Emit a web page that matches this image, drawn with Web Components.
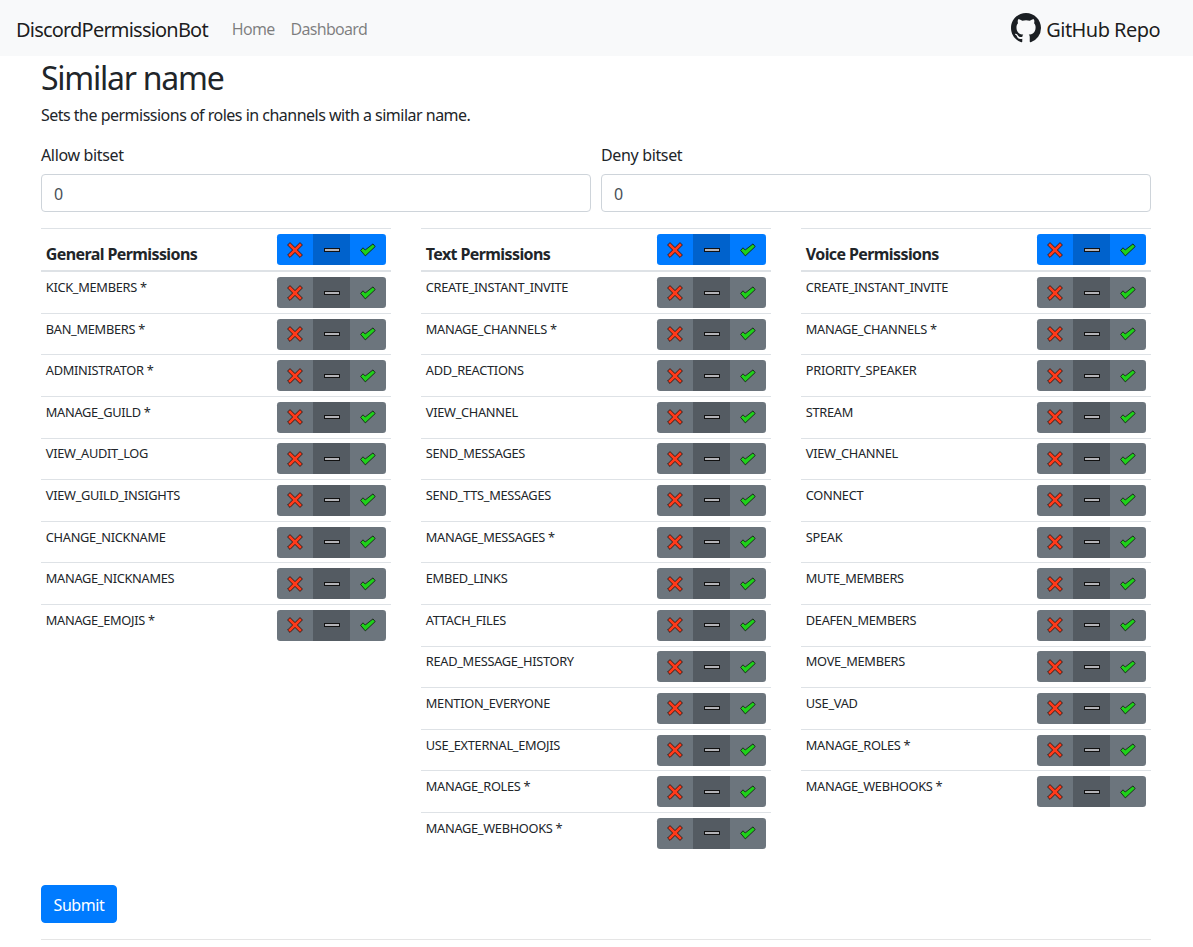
<!DOCTYPE html>
<html lang="en">
<head>
<meta charset="utf-8">
<title>Similar name</title>
<style>
  html, body { margin: 0; padding: 0; }
  body {
    font-family: "Noto Sans", "Open Sans", sans-serif;
    font-size: 16px;
    line-height: 1.5;
    color: #212529;
    background: #fff;
  }
</style>
</head>
<body>
<app-navbar></app-navbar>
<similar-name-page></similar-name-page>

<script>
const GENERAL = ["KICK_MEMBERS *", "BAN_MEMBERS *", "ADMINISTRATOR *", "MANAGE_GUILD *", "VIEW_AUDIT_LOG", "VIEW_GUILD_INSIGHTS", "CHANGE_NICKNAME", "MANAGE_NICKNAMES", "MANAGE_EMOJIS *"];
const TEXT = ["CREATE_INSTANT_INVITE", "MANAGE_CHANNELS *", "ADD_REACTIONS", "VIEW_CHANNEL", "SEND_MESSAGES", "SEND_TTS_MESSAGES", "MANAGE_MESSAGES *", "EMBED_LINKS", "ATTACH_FILES", "READ_MESSAGE_HISTORY", "MENTION_EVERYONE", "USE_EXTERNAL_EMOJIS", "MANAGE_ROLES *", "MANAGE_WEBHOOKS *"];
const VOICE = ["CREATE_INSTANT_INVITE", "MANAGE_CHANNELS *", "PRIORITY_SPEAKER", "STREAM", "VIEW_CHANNEL", "CONNECT", "SPEAK", "MUTE_MEMBERS", "DEAFEN_MEMBERS", "MOVE_MEMBERS", "USE_VAD", "MANAGE_ROLES *", "MANAGE_WEBHOOKS *"];

const templateNavbar = document.createElement("template");
templateNavbar.innerHTML = `
  <style>
    :host { display: flex; align-items: center; height: 56px; padding: 0 16px; background: #f8f9fa; box-sizing: border-box; }
    a { text-decoration: none; }
    .brand { font-size: 20px; color: rgba(0,0,0,.9); margin-right: 16px; letter-spacing: -0.8px; padding-top: 3px; }
    .link { color: rgba(0,0,0,.5); padding: 2px 8px 0; letter-spacing: -0.7px; }
    .repo { margin-left: auto; margin-right: 17px; display: flex; align-items: center; gap: 5px; font-size: 20px; color: rgba(0,0,0,.9); letter-spacing: -0.55px; }
    .repo span { padding-top: 3px; }
    svg { width: 30px; height: 30px; fill: #1b1f23; display: block; }
  </style>
  <a class="brand" href="#">DiscordPermissionBot</a>
  <a class="link" href="#">Home</a>
  <a class="link" href="#">Dashboard</a>
  <a class="repo" href="#">
    <svg viewBox="0 0 16 16"><path d="M8 0C3.58 0 0 3.58 0 8c0 3.54 2.29 6.53 5.47 7.59.4.07.55-.17.55-.38 0-.19-.01-.82-.01-1.49-2.01.37-2.53-.49-2.69-.94-.09-.23-.48-.94-.82-1.13-.28-.15-.68-.52-.01-.53.63-.01 1.08.58 1.23.82.72 1.21 1.87.87 2.33.66.07-.52.28-.87.51-1.07-1.78-.2-3.64-.89-3.64-3.95 0-.87.31-1.59.82-2.15-.08-.2-.36-1.02.08-2.12 0 0 .67-.21 2.2.82.64-.18 1.32-.27 2-.27.68 0 1.36.09 2 .27 1.53-1.04 2.2-.82 2.2-.82.44 1.1.16 1.92.08 2.12.51.56.82 1.27.82 2.15 0 3.07-1.87 3.75-3.65 3.95.29.25.54.73.54 1.48 0 1.07-.01 1.93-.01 2.2 0 .21.15.46.55.38A8.013 8.013 0 0016 8c0-4.42-3.58-8-8-8z"/></svg>
    <span>GitHub Repo</span>
  </a>
`;
class AppNavbar extends HTMLElement {
  constructor() {
    super();
    this.attachShadow({ mode: "open" }).appendChild(templateNavbar.content.cloneNode(true));
  }
}
customElements.define("app-navbar", AppNavbar);

const templateField = document.createElement("template");
templateField.innerHTML = `
  <style>
    :host { display: block; margin-bottom: 16px; }
    label { display: block; padding-top: 1px; margin-bottom: 7px; letter-spacing: -0.35px; }
    input {
      display: block; width: 100%; height: 38px; box-sizing: border-box;
      padding: 7px 12px 5px; font: inherit; color: #495057; background: #fff;
      border: 1px solid #ced4da; border-radius: 4px; outline: none;
    }
  </style>
  <label></label>
  <input type="text" value="0">
`;
class BitsetField extends HTMLElement {
  constructor() {
    super();
    const shadow = this.attachShadow({ mode: "open" });
    shadow.appendChild(templateField.content.cloneNode(true));
    shadow.querySelector("label").textContent = this.getAttribute("label");
  }
}
customElements.define("bitset-field", BitsetField);

const templateToggle = document.createElement("template");
templateToggle.innerHTML = `
  <style>
    :host { display: flex; flex: none; width: 109px; height: 31px; border-radius: 3.2px; overflow: hidden; background: var(--base, #6c757d); }
    span { width: 36px; display: flex; align-items: center; justify-content: center; }
    span.active { width: 37px; background: var(--active, #545b62); }
    svg { width: 20px; height: 20px; display: block; }
  </style>
  <span>
    <svg viewBox="0 0 20 20"><path d="M5 2.6L10 7.6 15 2.6 17.4 5 12.4 10 17.4 15 15 17.4 10 12.4 5 17.4 2.6 15 7.6 10 2.6 5Z" fill="#ff3a1a" stroke="#111" stroke-width=".8"/></svg>
  </span>
  <span class="active">
    <svg viewBox="0 0 20 20"><rect x="2.5" y="8.5" width="15" height="3" fill="#b4b4b8" stroke="#111" stroke-width="1"/></svg>
  </span>
  <span>
    <svg viewBox="0 0 20 20"><path d="M2.6 10.4L5 7.8 7.2 10 15 3.9 17.2 6.6 7.3 15.9Z" fill="#1fd01a" stroke="#111" stroke-width=".8" stroke-linejoin="round"/></svg>
  </span>
`;
class TriToggle extends HTMLElement {
  constructor() {
    super();
    this.attachShadow({ mode: "open" }).appendChild(templateToggle.content.cloneNode(true));
  }
}
customElements.define("tri-toggle", TriToggle);

const templateRow = document.createElement("template");
templateRow.innerHTML = `
  <style>
    :host { display: flex; justify-content: space-between; align-items: flex-start; padding: 4.8px; border-top: 1px solid #dee2e6; font-size: 12.8px; line-height: 19.2px; letter-spacing: -0.3px; }
    :host(:first-child) { border-top: 0; }
    span { padding-top: 1px; }
  </style>
  <span><slot></slot></span>
  <tri-toggle></tri-toggle>
`;
class PermRow extends HTMLElement {
  constructor() {
    super();
    this.attachShadow({ mode: "open" }).appendChild(templateRow.content.cloneNode(true));
  }
}
customElements.define("perm-row", PermRow);

const templateTable = document.createElement("template");
templateTable.innerHTML = `
  <style>
    :host { display: block; border-top: 1px solid #dee2e6; }
    header { display: flex; justify-content: space-between; align-items: flex-end; padding: 5px 4.8px 4.8px; border-bottom: 2px solid #dee2e6; }
    h3 { margin: 0; font-size: 16px; font-weight: 700; line-height: 22px; letter-spacing: -0.6px; }
    tri-toggle { --base: #007bff; --active: #0062cc; }
  </style>
  <header>
    <h3></h3>
    <tri-toggle></tri-toggle>
  </header>
  <div class="rows"><slot></slot></div>
`;
class PermTable extends HTMLElement {
  constructor() {
    super();
    const shadow = this.attachShadow({ mode: "open" });
    shadow.appendChild(templateTable.content.cloneNode(true));
    shadow.querySelector("h3").textContent = this.getAttribute("heading");
  }
  set permissions(names) {
    for (const name of names) {
      const row = document.createElement("perm-row");
      row.textContent = name;
      this.appendChild(row);
    }
  }
}
customElements.define("perm-table", PermTable);

const templatePage = document.createElement("template");
templatePage.innerHTML = `
  <style>
    :host { display: block; width: 1110px; margin-left: 41px; }
    h2 { margin: 3px 0 5px; font-size: 32px; font-weight: 400; line-height: 38.4px; letter-spacing: -1.25px; }
    p { margin: 0 0 15px; padding-top: 1px; letter-spacing: -0.51px; }
    .fields { display: grid; grid-template-columns: 1fr 1fr; gap: 10px; }
    .tables { display: grid; grid-template-columns: repeat(3, 1fr); gap: 30px; align-items: start; margin-bottom: 31.6px; }
    button {
      display: block; height: 38px; width: 76px; padding: 2px 0 0; font: inherit; color: #fff;
      background: #007bff; border: 1px solid #007bff; border-radius: 4px; letter-spacing: -0.4px;
    }
    hr { margin: 16px 0 0; border: 0; border-top: 1px solid rgba(0,0,0,.1); }
  </style>
  <h2>Similar name</h2>
  <p>Sets the permissions of roles in channels with a similar name.</p>
  <div class="fields">
    <bitset-field label="Allow bitset"></bitset-field>
    <bitset-field label="Deny bitset"></bitset-field>
  </div>
  <div class="tables">
    <perm-table id="general" heading="General Permissions"></perm-table>
    <perm-table id="text" heading="Text Permissions"></perm-table>
    <perm-table id="voice" heading="Voice Permissions"></perm-table>
  </div>
  <button type="button">Submit</button>
  <hr>
`;
class SimilarNamePage extends HTMLElement {
  constructor() {
    super();
    const shadow = this.attachShadow({ mode: "open" });
    shadow.appendChild(templatePage.content.cloneNode(true));
    shadow.querySelector("#general").permissions = GENERAL;
    shadow.querySelector("#text").permissions = TEXT;
    shadow.querySelector("#voice").permissions = VOICE;
  }
}
customElements.define("similar-name-page", SimilarNamePage);
</script>
</body>
</html>
